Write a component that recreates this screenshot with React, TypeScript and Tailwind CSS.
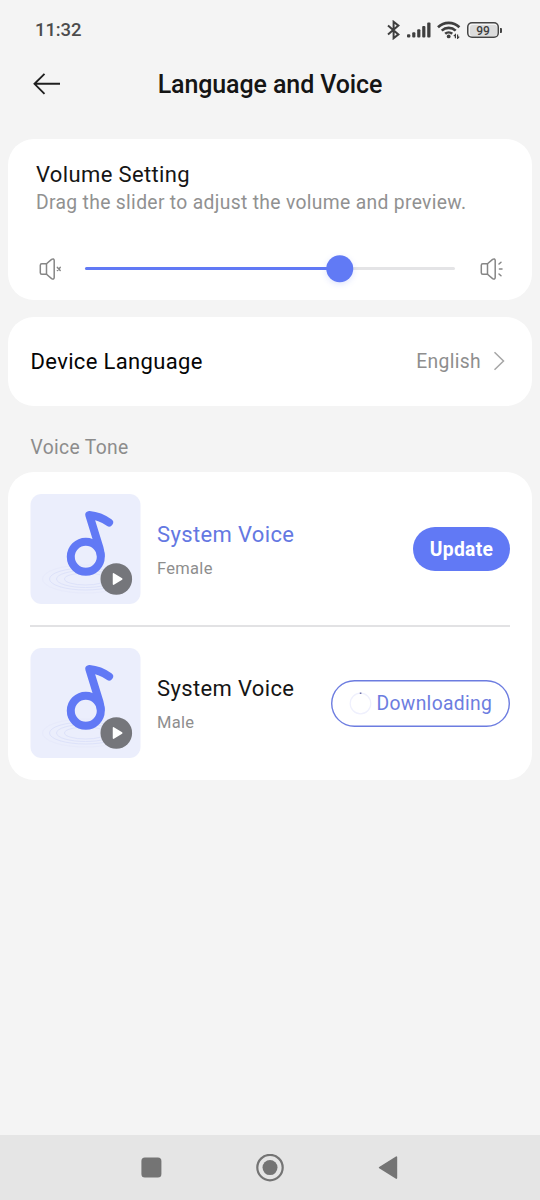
import type { ReactNode } from 'react';

type Voice = {
  id: string;
  name: string;
  gender: string;
  active: boolean;
  status: 'update' | 'downloading';
};

const voices: Voice[] = [
  { id: 'female', name: 'System Voice', gender: 'Female', active: true, status: 'update' },
  { id: 'male', name: 'System Voice', gender: 'Male', active: false, status: 'downloading' },
];

const VOLUME = 68.8;

function StatusBar() {
  return (
    <div className="flex h-[60px] items-center justify-between pr-[38px] pl-[35px]">
      <span className="pt-[2px] text-[18.5px] font-medium tracking-[-0.1px] text-[#4c4c4c]">11:32</span>
      <div className="flex items-center text-[#3f3f3f]">
        <svg className="mb-px" width="14" height="20" viewBox="0 0 14 20" fill="none" stroke="currentColor" strokeWidth="2">
          <path d="M1 5.5 L11.4 14.4 L6.6 18.2 V1.8 L11.4 5.6 L1 14.5" />
        </svg>
        <svg className="ml-[6px]" width="24" height="16" viewBox="0 0 24 16" fill="currentColor">
          <rect x="0" y="12.3" width="3.3" height="3.2" rx="1" />
          <rect x="5.2" y="10.2" width="3.2" height="5.3" rx="1" />
          <rect x="10.2" y="7.2" width="3.2" height="8.3" rx="1" />
          <rect x="15.2" y="4" width="3.2" height="11.5" rx="1" />
          <rect x="20.2" y="0.5" width="3.3" height="15" rx="1" />
        </svg>
        <svg className="ml-[6px]" width="24" height="18" viewBox="0 0 24 18" fill="none" stroke="currentColor" strokeWidth="2.6">
          <path d="M1 6.3 C7 0.4 16.4 0.4 22.4 6.3" />
          <path d="M4.7 9.6 C8.7 5.9 14.7 5.9 18.7 9.6" />
          <path d="M8.2 12.8 C10.2 11 13.2 11 15.2 12.8" />
          <circle cx="11.7" cy="15.4" r="1.9" fill="currentColor" stroke="none" />
          <path d="M18.4 17.3 V13.6 L16.8 15.2 M20.6 13.6 V17.3 L22.2 15.6" strokeWidth="1.2" />
        </svg>
        <div className="ml-[6px] flex h-[16px] w-[32px] items-center justify-center rounded-[5px] p-[2.5px] shadow-[inset_0_0_0_1.5px_#454545]">
          <div className="flex h-full w-full items-center justify-center rounded-[2.5px] bg-[#dcdcdc] pt-px text-[12px] leading-none font-medium">
            99
          </div>
        </div>
        <div className="ml-px h-[5px] w-[2px] rounded-r-[1px] bg-[#454545]" />
      </div>
    </div>
  );
}

function Header() {
  return (
    <header className="grid h-[50px] grid-cols-[60px_1fr_60px] items-center">
      <svg className="mb-[2px] ml-[32px]" width="29" height="24" viewBox="0 0 29 24" fill="none" stroke="#1f1f1f" strokeWidth="1.9">
        <path d="M12.5 1.8 L2.5 11.8 L12.5 21.8 M2.5 11.8 H28" />
      </svg>
      <h1 className="text-center text-[25px] font-medium tracking-[-0.1px] whitespace-nowrap text-[#151515]">
        Language and Voice
      </h1>
    </header>
  );
}

function SpeakerIcon({ children }: { children: ReactNode }) {
  return (
    <svg width="24" height="22" viewBox="0 0 24 22" fill="none" stroke="#868686" strokeWidth="1.5" strokeLinecap="round" strokeLinejoin="round">
      <path d="M7.5 5.8 H2.8 Q1.3 5.8 1.3 7.3 V14.7 Q1.3 16.2 2.8 16.2 H7.5 Z" />
      <path d="M7.5 5.8 L12.6 1.4 Q14.9 0.2 15.2 2.4 V19.6 Q14.9 21.8 12.6 20.6 L7.5 16.2" />
      {children}
    </svg>
  );
}

function VolumeCard() {
  return (
    <section className="flex h-[161px] flex-col rounded-[26px] bg-white px-[28px]">
      <h2 className="mt-[22px] text-[22px] leading-[28px] tracking-[0.36px] text-[#151515]">Volume Setting</h2>
      <p className="text-[19.3px] leading-[28px] tracking-[0.33px] whitespace-nowrap text-[#919191]">
        Drag the slider to adjust the volume and preview.
      </p>
      <div className="mt-[37.5px] flex h-[28px] items-center">
        <div className="ml-[3px]">
          <SpeakerIcon>
            <path d="M18.4 9.4 L21.2 12.4 M21.2 9.4 L18.4 12.4" />
          </SpeakerIcon>
        </div>
        <div className="relative ml-[22px] h-[3px] w-[370px] rounded-full bg-[#e4e4e6]">
          <div className="h-full rounded-full bg-[#6179f5]" style={{ width: `${VOLUME}%` }} />
          <div
            className="absolute top-1/2 size-[27.5px] -translate-x-1/2 -translate-y-1/2 rounded-full bg-[#617af5] shadow-[0_2px_6px_rgba(97,122,245,0.2)]"
            style={{ left: `${VOLUME}%` }}
          />
        </div>
        <div className="ml-[25px]">
          <SpeakerIcon>
            <path d="M19 6 L21 4.2 M19.4 11 H22 M19 16 L21 17.8" />
          </SpeakerIcon>
        </div>
      </div>
    </section>
  );
}

function LanguageRow() {
  return (
    <section className="mt-[17px] flex h-[89px] items-center rounded-[26px] bg-white pr-[27px] pl-[22.5px]">
      <span className="flex-1 text-[22px] tracking-[0.34px] text-[#050505]">Device Language</span>
      <span className="pt-px text-[19.3px] tracking-[0.35px] text-[#8e8e8e]">English</span>
      <svg className="mb-px ml-[12px]" width="12" height="20" viewBox="0 0 12 20" fill="none" stroke="#a6a6a6" strokeWidth="1.5">
        <path d="M1.5 1.2 L10.5 10 L1.5 18.8" />
      </svg>
    </section>
  );
}

function VoiceArtwork() {
  return (
    <svg className="shrink-0" width="111" height="110" viewBox="-0.5 0 111 110" fill="none">
      <rect width="110" height="110" rx="11" fill="#ebeefc" />
      {/* ripples under the note */}
      <g stroke="#dde2fa" strokeWidth="1">
        <ellipse cx="55" cy="85" rx="43" ry="14" stroke="#e7eafb" />
        <ellipse cx="55" cy="85" rx="36" ry="11" />
        <ellipse cx="55" cy="85" rx="29" ry="8.5" />
        <ellipse cx="55" cy="85" rx="21" ry="6" />
      </g>
      <g stroke="#6179f5" strokeWidth="8" strokeLinecap="round" strokeLinejoin="round">
        <circle cx="55.3" cy="62.7" r="15" />
        <path d="M70.2 61 Q70 58 69 54 L58.8 21 Q69.5 22 78.6 28.5" />
      </g>
      <circle cx="85.8" cy="85" r="15.8" fill="#75767b" />
      <path d="M83 79.8 L91.2 85 L83 90.2 Z" fill="#fff" stroke="#fff" strokeWidth="1.5" strokeLinejoin="round" />
    </svg>
  );
}

function VoiceAction({ status }: { status: Voice['status'] }) {
  if (status === 'update') {
    return (
      <button className="h-[44px] w-[97px] rounded-full bg-[#6179f5] pt-[2px] text-[19.3px] font-bold tracking-[0.3px] text-white">
        Update
      </button>
    );
  }

  return (
    <button className="flex h-[47px] w-[179px] items-center rounded-full pl-[17.5px] text-[19.3px] tracking-[0.33px] text-[#6c7de0] shadow-[inset_0_0_0_1.4px_#6c7ce0]">
      <svg className="mr-[5px]" width="23" height="23" viewBox="0 0 23 23" fill="none">
        <circle cx="11.5" cy="11.5" r="10.3" stroke="#eff0fd" strokeWidth="1.2" />
        <path d="M10.8 1.2 H12.4" stroke="#5a5f9a" strokeWidth="1.3" />
      </svg>
      <span className="pt-[2px]">Downloading</span>
    </button>
  );
}

function VoiceRow({ voice }: { voice: Voice }) {
  return (
    <div className="flex h-[110px] items-center">
      <VoiceArtwork />
      <div className="ml-[16px] flex-1 pt-[4px]">
        <div className={`text-[22px] leading-[30px] tracking-[0.36px] ${voice.active ? 'text-[#6478e2]' : 'text-[#151515]'}`}>
          {voice.name}
        </div>
        <div className="mt-[6px] text-[16.5px] leading-[26px] tracking-[0.3px] text-[#8e8e8e]">{voice.gender}</div>
      </div>
      <VoiceAction status={voice.status} />
    </div>
  );
}

function NavBar() {
  return (
    <nav className="flex h-[65px] items-center justify-center gap-[90px] bg-[#e5e5e5] text-[#747474]">
      <svg width="28" height="28" viewBox="0 0 28 28" fill="currentColor">
        <rect x="3.4" y="3.4" width="20" height="20" rx="3.5" />
      </svg>
      <svg width="28" height="28" viewBox="0 0.4 28 28">
        <circle cx="14" cy="14" r="12.7" fill="none" stroke="currentColor" strokeWidth="2.2" />
        <circle cx="14" cy="14" r="7.5" fill="currentColor" />
      </svg>
      <svg width="28" height="28" viewBox="0 0.4 28 28" fill="currentColor" stroke="currentColor" strokeWidth="1.6" strokeLinejoin="round">
        <path d="M5.6 14 L22.4 3.5 V24.5 Z" />
      </svg>
    </nav>
  );
}

export default function App() {
  return (
    <div className="flex h-[1200px] w-[540px] flex-col bg-[#f4f4f4] font-[Roboto,sans-serif]">
      <StatusBar />
      <Header />
      <main className="mt-[29px] flex-1 px-[8px]">
        <VolumeCard />
        <LanguageRow />
        <h3 className="mt-[28px] pl-[22.5px] text-[19.3px] leading-[28px] tracking-[0.33px] text-[#8c8c8c]">Voice Tone</h3>
        <section className="mt-[10px] flex h-[308px] flex-col rounded-[26px] bg-white px-[22px] pt-[22px]">
          <VoiceRow voice={voices[0]} />
          <div className="my-[21px] h-[2px] bg-[#e2e2e4]" />
          <VoiceRow voice={voices[1]} />
        </section>
      </main>
      <NavBar />
    </div>
  );
}
